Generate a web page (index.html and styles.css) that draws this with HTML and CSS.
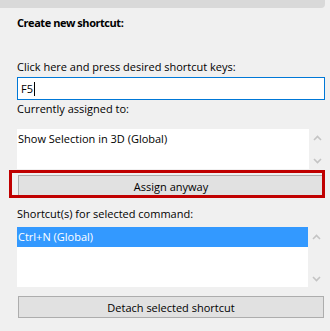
FILE: index.html
```html
<!DOCTYPE html>
<html lang="en">
<head>
    <meta charset="UTF-8">
    <title>Create new shortcut</title>
    <link rel="stylesheet" href="styles.css">
</head>
<body>
    <div class="top-bar"></div>

    <div class="panel">
        <p class="title">Create new shortcut:</p>

        <p class="label label-keys">Click here and press desired shortcut keys:</p>
        <div class="key-input">F5<span class="caret"></span></div>

        <p class="label label-current">Currently assigned to:</p>
        <div class="list list-current">
            <div class="list-body">
                <div class="list-item">Show Selection in 3D (Global)</div>
            </div>
            <div class="scroll">
                <svg width="9" height="6" viewBox="0 0 9 6"><polyline points="1,5 4.5,1.5 8,5" fill="none" stroke="#c4c4c4" stroke-width="1.6"/></svg>
                <svg width="9" height="6" viewBox="0 0 9 6"><polyline points="1,1 4.5,4.5 8,1" fill="none" stroke="#c4c4c4" stroke-width="1.6"/></svg>
            </div>
        </div>

        <div class="button-wrap">
            <button class="button">Assign anyway</button>
            <div class="highlight"></div>
        </div>

        <p class="label label-selected">Shortcut(s) for selected command:</p>
        <div class="list list-selected">
            <div class="list-body">
                <div class="list-item selected">Ctrl+N (Global)</div>
            </div>
            <div class="scroll">
                <svg width="9" height="6" viewBox="0 0 9 6"><polyline points="1,5 4.5,1.5 8,5" fill="none" stroke="#c4c4c4" stroke-width="1.6"/></svg>
                <svg width="9" height="6" viewBox="0 0 9 6"><polyline points="1,1 4.5,4.5 8,1" fill="none" stroke="#c4c4c4" stroke-width="1.6"/></svg>
            </div>
        </div>

        <button class="button button-detach">Detach selected shortcut</button>
    </div>
</body>
</html>
```

FILE: styles.css
```css
body {
    margin: 0;
    background-color: #f0f0f0;
    font-family: "Segoe UI", "Open Sans", sans-serif;
    font-size: 11px;
    color: #000000;
}

.top-bar {
    width: 325px;
    height: 8px;
    background-color: #d9d9d9;
    border-bottom-right-radius: 4px;
}

.panel {
    padding: 0 5px 0 17px;
}

.title {
    margin: 7px 0 0 0;
    line-height: 16px;
    font-weight: bold;
    letter-spacing: -0.45px;
}

.label {
    margin: 0;
    line-height: 16px;
}

.label-keys {
    margin-top: 28px;
}

.label-current {
    margin-top: 1px;
}

.label-selected {
    margin-top: 9px;
}

.key-input {
    margin-top: 2px;
    height: 23px;
    box-sizing: border-box;
    border: 1px solid #0078d7;
    background-color: #ffffff;
    padding: 0 3px;
    line-height: 21px;
    display: flex;
    align-items: center;
}

.caret {
    display: inline-block;
    width: 1px;
    height: 14px;
    background-color: #000000;
    margin-left: 1px;
}

.list {
    display: flex;
}

.list-current {
    margin-top: 12px;
    height: 40px;
}

.list-selected {
    margin-top: 5px;
    height: 60px;
}

.list-body {
    flex: 1;
    background-color: #ffffff;
}

.list-item {
    height: 20px;
    line-height: 18px;
    padding: 1px;
    box-sizing: border-box;
}

.selected {
    background-color: #3399ff;
    color: #ffffff;
}

.scroll {
    width: 16px;
    display: flex;
    flex-direction: column;
    justify-content: space-between;
    align-items: center;
    padding: 6px 0 5px 0;
    box-sizing: border-box;
}

.list-selected .scroll {
    width: 17px;
    padding: 7px 0 5px 0;
}

.button-wrap {
    position: relative;
    margin: 6px 1px 0 1px;
}

.button {
    display: block;
    width: 100%;
    height: 22px;
    margin: 0;
    padding: 0;
    border: 1px solid #adadad;
    background-color: #e1e1e1;
    font-family: inherit;
    font-size: 11px;
    color: #000000;
}

.button-detach {
    margin: 9px 1px 0 1px;
    width: calc(100% - 2px);
}

.highlight {
    position: absolute;
    left: -9px;
    top: -5px;
    right: -1px;
    bottom: -1px;
    border: 3px solid #c00000;
}
```
